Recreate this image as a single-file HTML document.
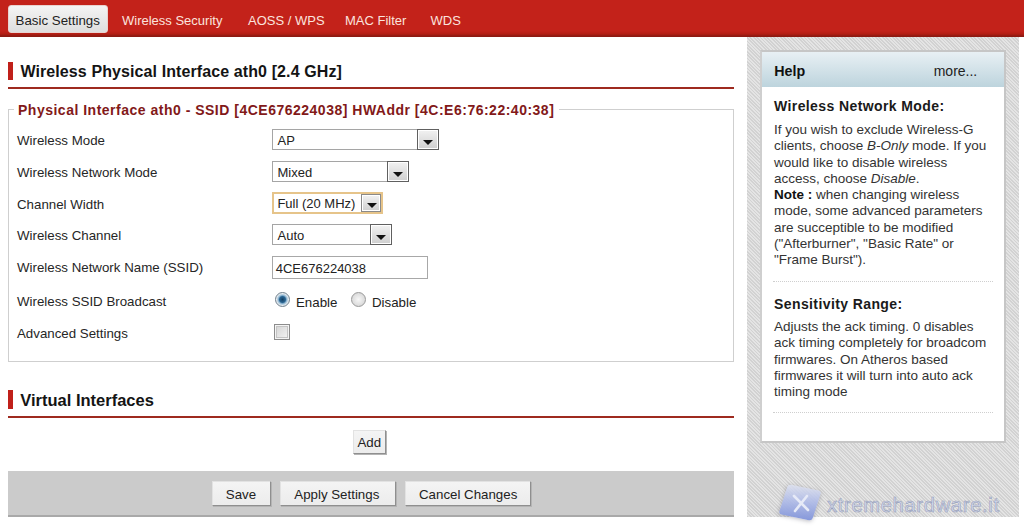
<!DOCTYPE html>
<html><head><meta charset="utf-8">
<style>
*{margin:0;padding:0;box-sizing:border-box}
html,body{width:1024px;height:531px;overflow:hidden;background:#fff;position:relative;font-family:"Liberation Sans",sans-serif}
.a{position:absolute}
.t{position:absolute;white-space:nowrap;line-height:1;font-size:13.3px;color:#262626}
#nav{left:0;top:0;width:1024px;height:37px;background:linear-gradient(#c3221a 0,#c3221a 31px,#b31e14 34px,#8e1a12 36px);}
#tab{left:8px;top:5px;width:100px;height:28px;border-radius:3px;background:linear-gradient(#f4f4f4,#dedede);border:1px solid #e9d3d0}
.nt{color:#fbe3de;font-size:13px}
.mk{background:#c0201a;width:5px}
.ul{background:#9e2a1f;height:2px}
.h1{font-weight:bold;font-size:16px;color:#141414}
#fs{left:8px;top:109px;width:726px;height:253px;border:1px solid #cfcfcf}
#lg{left:14px;top:100px;height:18px;background:#fff;width:545px}
.lgt{font-weight:bold;font-size:14px;letter-spacing:.5px;color:#821919}
.sel{position:absolute;border:1px solid #a5a5a5;background:#fff;height:21px}
.sel .dd{position:absolute;right:-1px;top:-1px;width:22px;height:21px;border:1.4px solid #606060;box-shadow:inset 0 0 0 1px #fff;background:linear-gradient(#f2f2f2,#cfcfcf)}
.sel .dd:after{content:"";position:absolute;left:4.6px;top:10.4px;border-left:5px solid transparent;border-right:5px solid transparent;border-top:5.2px solid #111}
.btn{position:absolute;background:linear-gradient(#f4f4f4,#ececec);border:1px solid #e2e2e2;border-right:1px solid #8f8f8f;border-bottom:1px solid #8f8f8f;box-shadow:1px 1px 0 #b4b4b4}
#hatch{left:747px;top:37px;width:272px;height:480px;background:repeating-linear-gradient(45deg,#d2d2d2 0,#d2d2d2 1.2px,#e4e4e4 1.2px,#e4e4e4 2.4px)}
#help{left:760px;top:50px;width:246px;height:393px;border:2px solid #c6c6c6;border-left-color:#cfcfcf;background:#fff}
#hh{left:0;top:0;width:242px;height:35px;background:linear-gradient(#e8f0f4,#bdd4dd)}
.ht{font-size:13.5px;color:#333}
.hb{font-weight:bold;font-size:14px;color:#1a1a1a;letter-spacing:.4px}
.sep{height:1px;border-top:1px dotted #cfcfcf}
.dd2:after{top:8px!important;left:4.5px!important}
.st{font-size:13px;color:#222}
</style></head><body>

<div id="nav" class="a"></div>
<div id="tab" class="a"></div>
<span class="t" style="left:15.6px;top:13.6px;color:#222">Basic Settings</span>
<span class="t nt" style="left:122px;top:14px">Wireless Security</span>
<span class="t nt" style="left:248px;top:14px">AOSS / WPS</span>
<span class="t nt" style="left:345px;top:14px">MAC Filter</span>
<span class="t nt" style="left:430.5px;top:14px">WDS</span>

<!-- Title 1 -->
<div class="a mk" style="left:8px;top:62px;height:18px"></div>
<span class="t h1" style="left:20.4px;top:63.5px;letter-spacing:.1px">Wireless Physical Interface ath0 [2.4 GHz]</span>
<div class="a ul" style="left:8px;top:87px;width:726px"></div>

<!-- Fieldset -->
<div id="fs" class="a"></div>
<div id="lg" class="a"></div>
<span class="t lgt" style="left:18px;top:103px">Physical Interface ath0 - SSID [4CE676224038] HWAddr [4C:E6:76:22:40:38]</span>

<span class="t" style="left:17px;top:134px">Wireless Mode</span>
<span class="t" style="left:17px;top:166px">Wireless Network Mode</span>
<span class="t" style="left:17px;top:197.7px">Channel Width</span>
<span class="t" style="left:17px;top:229px">Wireless Channel</span>
<span class="t" style="left:17px;top:260.7px">Wireless Network Name (SSID)</span>
<span class="t" style="left:17px;top:294.7px">Wireless SSID Broadcast</span>
<span class="t" style="left:17px;top:327px">Advanced Settings</span>

<div class="sel" style="left:272px;top:129px;width:167px"><div class="dd"></div></div>
<span class="t st" style="left:277.5px;top:134px">AP</span>
<div class="sel" style="left:272px;top:160.5px;width:137px"><div class="dd"></div></div>
<span class="t st" style="left:277.5px;top:166px">Mixed</span>
<div class="sel" style="left:272px;top:191.5px;width:111px;height:22px;border:2px solid #e6c48a"><div class="dd dd2" style="right:0;top:0;width:20px;height:18px;border-color:#8a8a8a"></div></div>
<span class="t st" style="left:277.4px;top:197px">Full (20 MHz)</span>
<div class="sel" style="left:272px;top:224px;width:120px"><div class="dd"></div></div>
<span class="t st" style="left:277.5px;top:229px">Auto</span>

<div class="a" style="left:272px;top:255.5px;width:156px;height:23px;border:1px solid #a8a8a8"></div>
<span class="t st" style="left:275.7px;top:261.5px">4CE676224038</span>

<!-- radios -->
<div class="a" style="left:275px;top:292px;width:15px;height:15px;border-radius:50%;border:1px solid #6f7f8c;background:radial-gradient(circle,#123f63 0,#2a6592 3px,#8fb6d2 4.2px,#e6ecf0 6px)"></div>
<span class="t" style="left:296px;top:295.5px;color:#222">Enable</span>
<div class="a" style="left:351px;top:292px;width:15px;height:15px;border-radius:50%;border:1px solid #999;background:radial-gradient(circle,#f7f7f7 0,#d8d8d8 7px)"></div>
<span class="t" style="left:372px;top:295.5px;color:#222">Disable</span>

<div class="a" style="left:274px;top:324px;width:16px;height:16px;border:1px solid #8c8c8c;box-shadow:inset 0 0 0 1px #f4f4f4,inset 0 0 0 2px #c4c4c4;background:linear-gradient(135deg,#d2d2d2,#f6f6f6)"></div>

<!-- Title 2 -->
<div class="a mk" style="left:8px;top:390px;height:19px"></div>
<span class="t h1" style="left:20.3px;top:392px;font-size:16.5px">Virtual Interfaces</span>
<div class="a ul" style="left:8px;top:416px;width:726px"></div>

<div class="btn" style="left:353px;top:430px;width:33px;height:24px"></div>
<span class="t" style="left:357.5px;top:436.3px;color:#222">Add</span>

<!-- bottom bar -->
<div class="a" style="left:8px;top:470.5px;width:726px;height:46px;background:#cbcbcb;border-bottom:2px solid #a9a9a9"></div>
<div class="btn" style="left:212px;top:481px;width:59px;height:25px"></div>
<span class="t" style="left:225.8px;top:488px;color:#222">Save</span>
<div class="btn" style="left:280px;top:481px;width:116px;height:25px"></div>
<span class="t" style="left:294.3px;top:488px;color:#222">Apply Settings</span>
<div class="btn" style="left:405px;top:481px;width:126px;height:25px"></div>
<span class="t" style="left:419px;top:488px;color:#222">Cancel Changes</span>

<!-- help sidebar -->
<div id="hatch" class="a"></div>
<div id="help" class="a">
  <div id="hh" class="a"></div>
</div>
<span class="t" style="left:774.3px;top:63.8px;font-weight:bold;font-size:14.3px;color:#111">Help</span>
<span class="t" style="left:933.7px;top:64px;font-size:14px;color:#222">more...</span>

<span class="t hb" style="left:774px;top:99px">Wireless Network Mode:</span>
<div class="t ht" style="left:774px;top:122px;line-height:16.3px;white-space:pre">If you wish to exclude Wireless-G
clients, choose <i>B-Only</i> mode. If you
would like to disable wireless
access, choose <i>Disable</i>.
<b style="color:#111">Note :</b> when changing wireless
mode, some advanced parameters
are succeptible to be modified
("Afterburner", "Basic Rate" or
"Frame Burst").</div>
<div class="a sep" style="left:773px;top:281px;width:220px"></div>
<span class="t hb" style="left:774px;top:296.5px">Sensitivity Range:</span>
<div class="t ht" style="left:774px;top:319px;line-height:16.3px;white-space:pre">Adjusts the ack timing. 0 disables
ack timing completely for broadcom
firmwares. On Atheros based
firmwares it will turn into auto ack
timing mode</div>
<div class="a sep" style="left:773px;top:412px;width:220px"></div>

<!-- watermark -->
<div class="a" style="left:783px;top:487px;width:34px;height:31px;transform:rotate(12deg) skewX(-6deg);border-radius:3px;background:linear-gradient(170deg,rgba(222,226,240,.8) 0,rgba(176,188,232,.9) 45%,#8597da 100%);box-shadow:0 1px 4px rgba(60,60,80,.35)"></div>
<svg class="a" style="left:786px;top:490px" width="30" height="26" viewBox="0 0 30 26"><path d="M8 6 L22 20 M21 6 L9 21" stroke="#e6eaf7" stroke-width="2.6" stroke-linecap="round" fill="none"/></svg>
<span class="t" style="left:827px;top:494.6px;font-size:20px;letter-spacing:.75px;color:#d3d9eb;-webkit-text-stroke:0.55px #939bb8">xtremehardware.it</span>

</body></html>
